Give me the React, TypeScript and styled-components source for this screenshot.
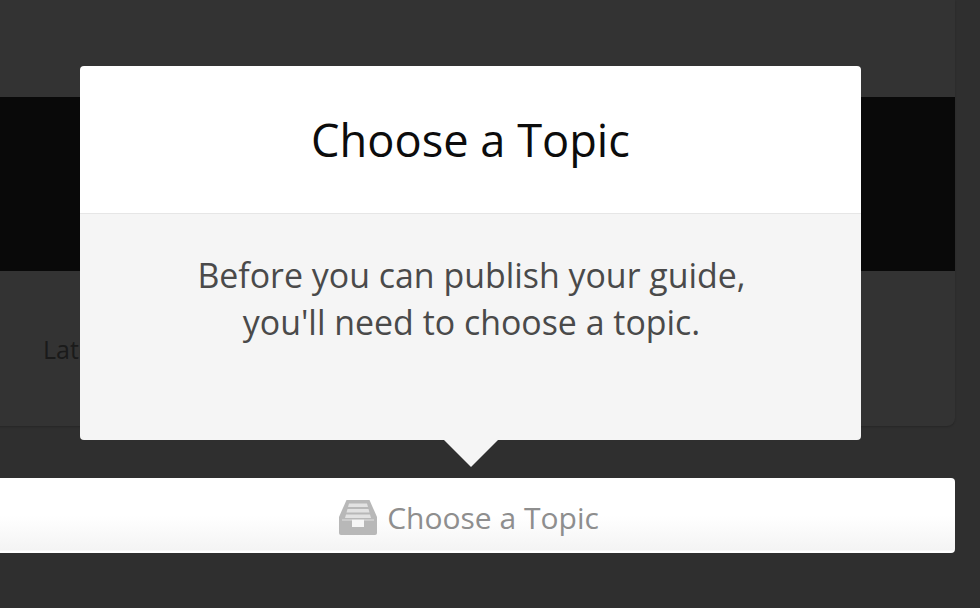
import React from 'react';
import styled, { createGlobalStyle } from 'styled-components';

const Global = createGlobalStyle`
  html, body { margin: 0; padding: 0; background: #2f2f2f; }
  body { font-family: "Open Sans", "Noto Sans", sans-serif; }
`;

const Page = styled.div`
  position: relative;
  width: 980px;
  height: 608px;
  overflow: hidden;
  background: #2f2f2f;
  display: flex;
  flex-direction: column;
`;

const Card = styled.section`
  margin: 0 25px 0 -20px;
  height: 426px;
  padding-top: 97px;
  box-sizing: border-box;
  background: #333333;
  border-radius: 0 0 8px 8px;
  box-shadow: 0 1px 2px rgba(0, 0, 0, 0.2);
  display: flex;
  flex-direction: column;
  flex: none;
`;

const Banner = styled.div`
  height: 174px;
  background: #090909;
  flex: none;
`;

const CardFoot = styled.div`
  flex: 1;
  display: flex;
  align-items: center;
  padding-left: 63px;
  font-size: 25px;
  color: #1a1a1a;
`;

const TopicButton = styled.button`
  margin: 52px 25px 0 -20px;
  height: 75px;
  flex: none;
  border: 0;
  border-radius: 4px;
  background: linear-gradient(#ffffff 0%, #ffffff 50%, #f4f4f4 96%, #ffffff 98%);
  box-sizing: border-box;
  display: flex;
  align-items: center;
  justify-content: center;
  gap: 10px;
  padding: 3px 0 0 3px;
  font-family: inherit;
  font-size: 30px;
  color: #8e8e8e;
`;

const Modal = styled.div`
  position: absolute;
  left: 80px;
  top: 66px;
  width: 781px;
  height: 374px;
  border-radius: 4px;
  display: flex;
  flex-direction: column;
  &::after {
    content: '';
    position: absolute;
    left: 364px;
    bottom: -27px;
    border-style: solid;
    border-width: 27px 27px 0 27px;
    border-color: #f5f5f5 transparent transparent transparent;
  }
`;

const ModalHeader = styled.header`
  height: 147px;
  flex: none;
  background: #ffffff;
  border-radius: 4px 4px 0 0;
  border-bottom: 1px solid #e6e6e6;
  display: flex;
  align-items: center;
  justify-content: center;
`;

const Title = styled.h2`
  margin: 0;
  font-size: 45.2px;
  font-weight: 400;
  color: #0c0c0c;
`;

const ModalBody = styled.div`
  flex: 1;
  background: #f5f5f5;
  border-radius: 0 0 4px 4px;
  padding: 38px 0 0 2px;
  text-align: center;
  font-size: 33.9px;
  line-height: 47px;
  color: #4a4a4a;
`;

const Line = styled.div``;

const TrayIcon = () => (
  <svg width="38" height="35" viewBox="0 0 38 35" aria-hidden="true">
    <path d="M7.5 0H30.5L38 17V33a2 2 0 0 1-2 2H2a2 2 0 0 1-2-2V17Z" fill="#b8b8b8" />
    <path d="M10 3.5H28L29 7H9ZM8.5 9H29.5L30.5 12.5H7.5ZM7 14.5H31L32 18H6Z" fill="#e2e2e2" />
    <path d="M13 19.5H25V27H13Z" fill="#f6f6f6" />
    <path d="M3 19H13V21H3ZM25 19H35V21H25Z" fill="#cccccc" />
  </svg>
);

export default function App() {
  return (
    <Page>
      <Global />
      <Card>
        <Banner />
        <CardFoot>Latest</CardFoot>
      </Card>
      <TopicButton>
        <TrayIcon />
        Choose a Topic
      </TopicButton>
      <Modal>
        <ModalHeader>
          <Title>Choose a Topic</Title>
        </ModalHeader>
        <ModalBody>
          <Line>Before you can publish your guide,</Line>
          <Line>you'll need to choose a topic.</Line>
        </ModalBody>
      </Modal>
    </Page>
  );
}
